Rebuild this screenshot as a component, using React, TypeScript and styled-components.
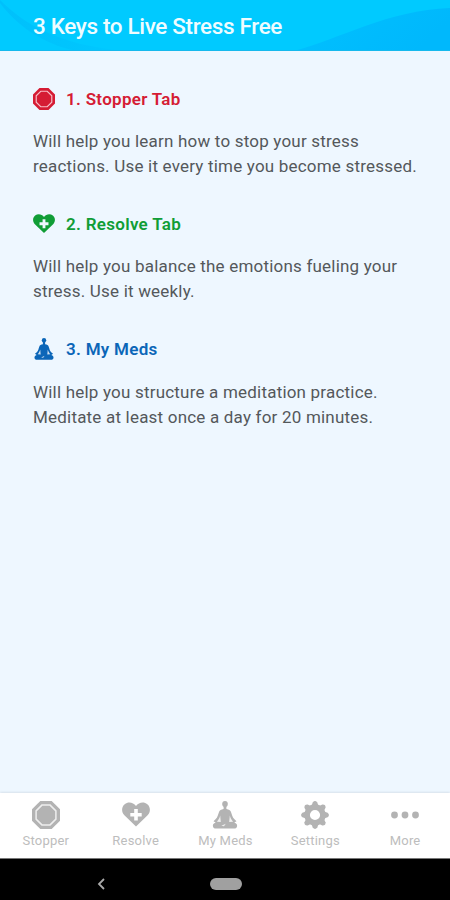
import React from 'react';
import styled, { createGlobalStyle } from 'styled-components';

const GlobalStyle = createGlobalStyle`
  * { box-sizing: border-box; }
  body { margin: 0; background: #eef7ff; font-family: Roboto, "Noto Sans", sans-serif; }
`;

const Screen = styled.div`
  width: 100%;
  max-width: 450px;
  height: 900px;
  display: flex;
  flex-direction: column;
  overflow: hidden;
  background: #eef7ff;
`;

const Header = styled.header`
  display: grid;
  height: 51px;
  flex: none;
  background: #00caff;
  > * { grid-area: 1 / 1; }
`;

const Waves = styled.svg`
  display: block;
  width: 100%;
  height: 51px;
`;

const Title = styled.h1`
  margin: 0;
  padding: 11px 0 0 33px;
  color: #effcff;
  font-size: 22.5px;
  line-height: 30px;
  font-weight: 500;
  letter-spacing: -0.35px;
  white-space: nowrap;
  z-index: 1;
`;

const Content = styled.main`
  flex: 1;
  padding: 35px 0 0 33px;
`;

const Section = styled.section`
  height: 125.4px;
`;

const Heading = styled.h2<{ $color: string }>`
  display: flex;
  align-items: center;
  gap: 11px;
  height: 25px;
  margin: 0 0 18px;
  color: ${(p) => p.$color};
  font-size: 17px;
  font-weight: 600;
  letter-spacing: 0.3px;
`;

const Copy = styled.p`
  margin: 0;
  color: #54585b;
  font-size: 17px;
  line-height: 25px;
  font-weight: 400;
  letter-spacing: 0.2px;
  white-space: nowrap;
`;

const TabBar = styled.nav`
  display: grid;
  grid-template-columns: repeat(5, 1fr);
  flex: none;
  height: 65px;
  background: #fff;
  box-shadow: 0 -1px 2px rgba(80, 100, 110, 0.14);
  padding: 8px 0 0 1px;
`;

const Tab = styled.a`
  display: flex;
  flex-direction: column;
  align-items: center;
  color: #b3b3b3;
`;

const TabLabel = styled.span`
  margin-top: 4px;
  color: #bdbdbd;
  font-size: 13px;
  line-height: 16px;
  font-weight: 400;
  letter-spacing: 0.2px;
`;

const SystemBar = styled.footer`
  display: grid;
  grid-template-columns: 202px 47px 1fr;
  align-items: center;
  flex: none;
  height: 42px;
  padding-top: 9px;
  background: #000;
  border-top: 1px solid #777;
`;

const BackArrow = styled.svg`
  justify-self: center;
`;

const HomePill = styled.span`
  justify-self: center;
  width: 32px;
  height: 12px;
  border-radius: 6px;
  background: #a0a0a0;
`;

const Icon = styled.svg<{ $size: number }>`
  display: block;
  flex: none;
  width: ${(p) => p.$size}px;
  height: ${(p) => p.$size}px;
  fill: currentColor;
`;

type IconProps = { size: number; ring?: string };

const StopIcon = ({ size, ring = '#fff' }: IconProps) => (
  <Icon $size={size} viewBox="0 0 28 28">
    <path d="M8.3 0h11.4L28 8.3v11.4L19.7 28H8.3L0 19.7V8.3Z" />
    <path d="M9.900 4.100h8.200l5.800 5.800v8.200l-5.800 5.800H9.900l-5.800-5.800V9.900Z" fill="none" stroke={ring} strokeWidth="1.500" />
  </Icon>
);

const HeartIcon = ({ size }: IconProps) => (
  <Icon $size={size} viewBox="0 0 28 28">
    <path
      fillRule="evenodd"
      d="M14 25.500 2.400 14.300C-.9 10.800-.5 5.700 2.700 3.200 6.400.3 11.400 1.500 14 5c2.600-3.500 7.600-4.700 11.300-1.800 3.200 2.500 3.600 7.600.3 11.100ZM12.200 8v3.900H8.300v3.600h3.900v3.900h3.600v-3.900h3.900v-3.600h-3.900V8Z"
    />
  </Icon>
);

const MeditateIcon = ({ size }: IconProps) => (
  <Icon $size={size} viewBox="0 0 28 28">
    <ellipse cx="14" cy="3" rx="2.800" ry="3" />
    <path d="M12.600 5h2.800v3c2.500.5 3.900 1.200 4.500 2.700 1 2.600 1.400 5.500 3.600 7.600l2 1.900-2.200 1.300c2.200 1 3 2.100 2.800 3.500-.2 1.900-1.400 2.600-3 2.600H4.900c-1.600 0-2.800-.7-3-2.600-.2-1.400.6-2.500 2.800-3.500l-2.200-1.300 2-1.900c2.200-2.100 2.600-5 3.600-7.600.6-1.500 2-2.200 4.500-2.700Z" />
    <path
      d="M9.200 14.500c-.6 2.400-1.700 4.300-3.300 6.200l3.900.3ZM18.800 14.500c.6 2.400 1.700 4.300 3.300 6.200l-3.900.3ZM10.300 24.700l4.500-2-1.800 2.500Z"
      fill="#fff"
      fillOpacity=".8"
    />
  </Icon>
);

const GearIcon = ({ size }: IconProps) => (
  <Icon $size={size} viewBox="0 0 28 28">
    <circle cx="14" cy="14" r="7.900" fill="none" stroke="currentColor" strokeWidth="5.600" />
    {[0, 45, 90, 135, 180, 225, 270, 315].map((angle) => (
      <path key={angle} d="m10.500 5 1.200-3.600Q14-1.300 16.300 1.400L17.500 5Z" transform={`rotate(${angle} 14 14)`} />
    ))}
  </Icon>
);

const MoreIcon = ({ size }: IconProps) => (
  <Icon $size={size} viewBox="0 0 28 28">
    <circle cx="3.500" cy="14" r="3.400" />
    <circle cx="14" cy="14" r="3.400" />
    <circle cx="24.500" cy="14" r="3.400" />
  </Icon>
);

const sections = [
  { title: '1. Stopper Tab', color: '#d51c34', Glyph: StopIcon, lines: ['Will help you learn how to stop your stress', 'reactions. Use it every time you become stressed.'] },
  { title: '2. Resolve Tab', color: '#109d36', Glyph: HeartIcon, lines: ['Will help you balance the emotions fueling your', 'stress. Use it weekly.'] },
  { title: '3. My Meds', color: '#0b66b8', Glyph: MeditateIcon, lines: ['Will help you structure a meditation practice.', 'Meditate at least once a day for 20 minutes.'] },
];

const tabs = [
  { label: 'Stopper', Glyph: StopIcon },
  { label: 'Resolve', Glyph: HeartIcon },
  { label: 'My Meds', Glyph: MeditateIcon },
  { label: 'Settings', Glyph: GearIcon },
  { label: 'More', Glyph: MoreIcon },
];

export default function App() {
  return (
    <Screen>
      <GlobalStyle />
      <Header>
        <Waves viewBox="0 0 450 51" preserveAspectRatio="none">
          <defs>
            <linearGradient id="wave" x1="0" x2="1" y1="0" y2="0.300">
              <stop offset="0" stopColor="#00c1ff" />
              <stop offset="1" stopColor="#00b8fc" />
            </linearGradient>
            <linearGradient id="crest" x1="0" x2="1" y1="0" y2="0">
              <stop offset="0" stopColor="#00c0fb" />
              <stop offset="1" stopColor="#00c8ff" />
            </linearGradient>
          </defs>
          <path d="M0 0C24 24 58 45 125 51H76C40 43 16 24 0 3Z" fill="url(#crest)" />
          <path d="M294 51C340 39 388 10 450 8v43Z" fill="url(#wave)" />
          <path d="M0 50.500h450" stroke="#16b9ed" />
        </Waves>
        <Title>3 Keys to Live Stress Free</Title>
      </Header>
      <Content>
        {sections.map(({ title, color, Glyph, lines }) => (
          <Section key={title}>
            <Heading $color={color}>
              <Glyph size={22} ring="#f7bdc7" />
              {title}
            </Heading>
            <Copy>
              {lines[0]}
              <br />
              {lines[1]}
            </Copy>
          </Section>
        ))}
      </Content>
      <TabBar>
        {tabs.map(({ label, Glyph }) => (
          <Tab key={label}>
            <Glyph size={28} ring="#eeeeee" />
            <TabLabel>{label}</TabLabel>
          </Tab>
        ))}
      </TabBar>
      <SystemBar>
        <BackArrow width="8" height="12" viewBox="0 0 8 12" fill="none" stroke="#aaa" strokeWidth="1.800">
          <path d="M7 1 2 6l5 5" />
        </BackArrow>
        <HomePill />
      </SystemBar>
    </Screen>
  );
}
